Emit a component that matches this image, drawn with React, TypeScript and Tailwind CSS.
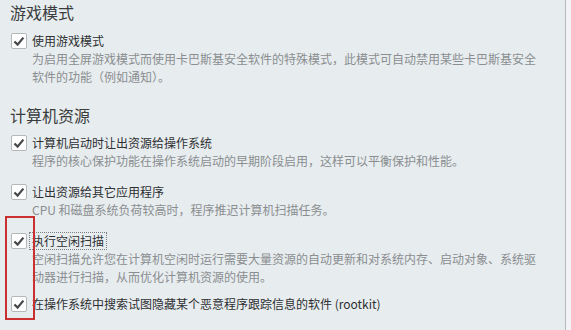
import React from 'react';

type Item = {
  label: string;
  desc?: string;
  focused?: boolean;
  gap: string;
};

const sections: { title: string; top: string; first: string; items: Item[] }[] = [
  {
    title: '游戏模式',
    top: 'mt-[1px]',
    first: 'mt-[9px]',
    items: [
      {
        label: '使用游戏模式',
        desc: '为启用全屏游戏模式而使用卡巴斯基安全软件的特殊模式，此模式可自动禁用某些卡巴斯基安全软件的功能（例如通知）。',
        gap: '',
      },
    ],
  },
  {
    title: '计算机资源',
    top: 'mt-[18px]',
    first: 'mt-[8px]',
    items: [
      { label: '计算机启动时让出资源给操作系统', desc: '程序的核心保护功能在操作系统启动的早期阶段启用，这样可以平衡保护和性能。', gap: '' },
      { label: '让出资源给其它应用程序', desc: 'CPU 和磁盘系统负荷较高时，程序推迟计算机扫描任务。', gap: 'mt-[13px]' },
      {
        label: '执行空闲扫描',
        desc: '空闲扫描允许您在计算机空闲时运行需要大量资源的自动更新和对系统内存、启动对象、系统驱动器进行扫描，从而优化计算机资源的使用。',
        focused: true,
        gap: 'mt-[13px]',
      },
      { label: '在操作系统中搜索试图隐藏某个恶意程序跟踪信息的软件 (rootkit)', gap: 'mt-[9px]' },
    ],
  },
];

function CheckBox() {
  return (
    <span className="flex h-[16px] w-[16px] shrink-0 items-center justify-center rounded-[2px] border border-[#b4b8ba] bg-white">
      <svg viewBox="0 0 16 16" className="h-[15px] w-[15px]">
        <path d="M2.8 8 L6.4 11.6 L13 3.6" fill="none" stroke="#45484a" strokeWidth="2.6" />
      </svg>
    </span>
  );
}

export default function App() {
  return (
    <div
      className="relative flex h-[330px] w-[571px] overflow-hidden bg-[#e7ecef]"
      style={{ fontFamily: '"Noto Sans CJK SC", "Noto Sans", sans-serif' }}
    >
      <div className="w-[565px] pl-[10px]">
        {sections.map((section) => (
          <div key={section.title} className={section.top}>
            <h2 className="text-[16px] leading-[22px] text-[#3a3c3e]">{section.title}</h2>
            <div className={section.first}>
              {section.items.map((item) => (
                <div key={item.label} className={item.gap}>
                  <div className="flex h-[18px] items-center pl-[1px]">
                    <CheckBox />
                    <span
                      className={`ml-[3px] px-[2px] text-[12px] leading-[16px] text-[#2e3032] ${
                        item.focused ? 'outline outline-1 outline-dotted outline-[#7a7e80]' : ''
                      }`}
                    >
                      {item.label}
                    </span>
                  </div>
                  {item.desc && (
                    <p className="w-[534px] pl-[22px] text-[12px] leading-[18px] text-[#8a8e90]">{item.desc}</p>
                  )}
                </div>
              ))}
            </div>
          </div>
        ))}
      </div>
      <div className="w-[6px] border-l border-[#b3b9bc] bg-[#f2f3f4]" />

      <div className="absolute left-[5px] top-[216px] h-[104px] w-[30px] border-2 border-[#c9302f]" />
    </div>
  );
}
